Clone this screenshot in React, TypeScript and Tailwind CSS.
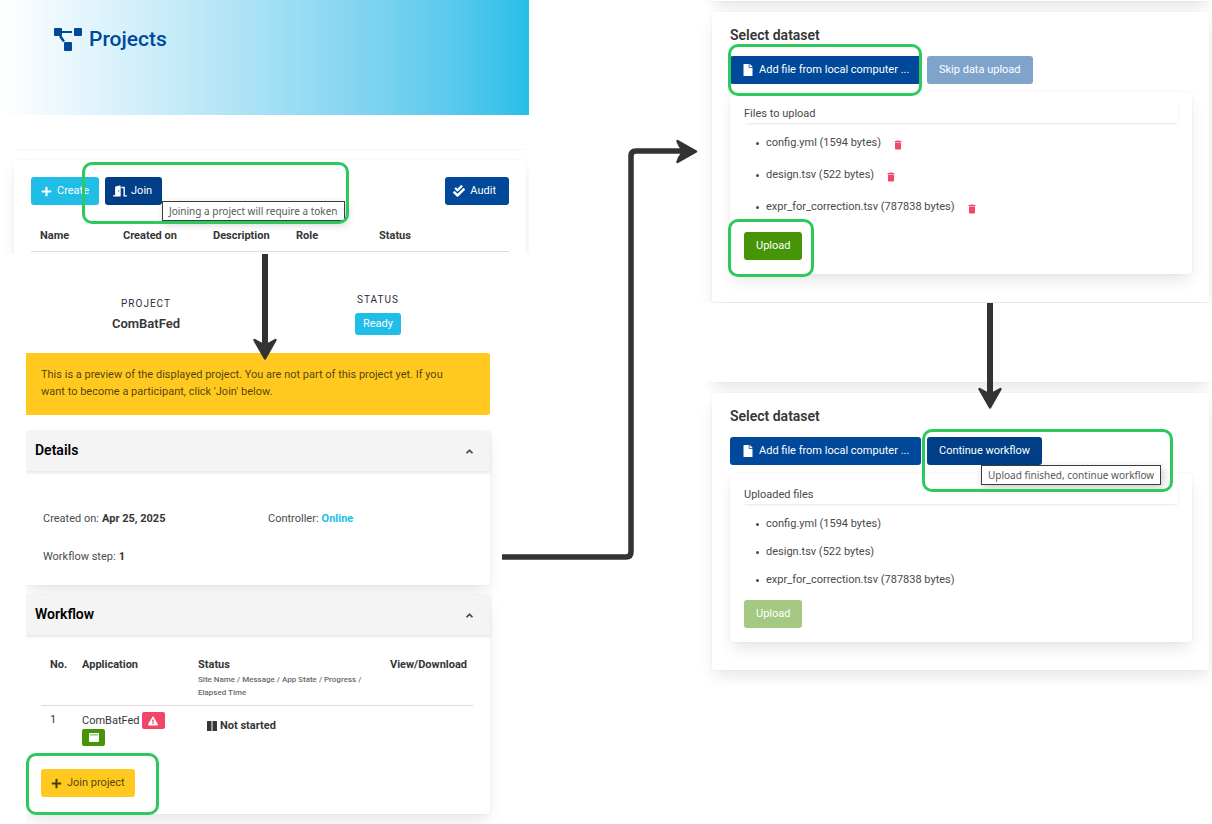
import type { ReactNode } from "react";
import { FaAngleUp, FaCheckDouble, FaDoorOpen, FaExclamationTriangle, FaFile, FaPlus } from "react-icons/fa";
import { MdDelete } from "react-icons/md";

const cardShadow = "shadow-[0_8px_16px_-2px_rgba(10,10,10,0.1),0_0_0_1px_rgba(10,10,10,0.02)]";
const button = "flex h-7 items-center rounded-[3px] text-[11px] leading-4 whitespace-nowrap";
const highlight = "pointer-events-none absolute rounded-[10px] border-3 border-[#2dc95c]";
const tooltip =
  "absolute flex h-5 items-center border border-[#3c3c3c] bg-white px-[6px] font-['Noto_Sans'] text-[10px] whitespace-nowrap text-[#575757] shadow-[2px_3px_8px_rgba(0,0,0,0.2)]";

function DownArrow({ length }: { length: number }) {
  return (
    <svg width="26" height={length} viewBox={`0 0 26 ${length}`} fill="#333" aria-hidden="true">
      <rect x="10" y="0" width="6" height={length - 12} />
      <path
        d={`M2.500 ${length - 20}Q6 ${length - 18} 10 ${length - 16}H16Q20 ${length - 18} 23.500 ${length - 20}L13 ${length - 1.5}Z`}
        stroke="#333"
        strokeWidth="2.500"
        strokeLinejoin="round"
      />
    </svg>
  );
}

function Connector() {
  return (
    <svg width="196" height="424" viewBox="0 0 196 424" aria-hidden="true">
      <path d="M0 418H124Q129 418 129 413V17Q129 12 134 12H182" fill="none" stroke="#333" strokeWidth="5.500" />
      <path
        d="M175.500 2Q177 6 179.500 9.500V15.500Q177 18 175.500 23L194 12.500Z"
        fill="#333"
        stroke="#333"
        strokeWidth="2.500"
        strokeLinejoin="round"
      />
    </svg>
  );
}

function DiagramIcon() {
  return (
    <svg width="28" height="23" viewBox="0 0 28 23" fill="currentColor" aria-hidden="true">
      <rect x="0" y="0" width="8" height="8" rx="1" />
      <rect x="20" y="0" width="8" height="8" rx="1" />
      <rect x="10" y="14" width="8" height="9" rx="1" />
      <rect x="8" y="3" width="10" height="2" />
      <path d="M6 8L10 13.500" stroke="currentColor" strokeWidth="2.500" />
    </svg>
  );
}

function WindowIcon() {
  return (
    <svg width="10" height="9" viewBox="0 0 10 9" fill="currentColor" aria-hidden="true">
      <rect width="10" height="9" rx="0.800" />
      <rect x="1" y="1.500" width="8" height="0.800" fill="#469408" />
    </svg>
  );
}

function PauseIcon() {
  return (
    <svg width="10" height="10" viewBox="0 0 10 10" fill="currentColor" aria-hidden="true">
      <rect width="4.500" height="10" rx="0.500" />
      <rect x="5.500" width="4.500" height="10" rx="0.500" />
    </svg>
  );
}

function ProjectsPanel() {
  return (
    <section className="overflow-hidden">
      <header className="h-[115px] bg-linear-to-r from-white to-[#22bfe8] pt-6 pl-[54px]">
        <h1 className="flex items-center gap-[7px] text-[21px] leading-[30px] font-medium text-[#004899]">
          <DiagramIcon />
          Projects
        </h1>
      </header>
      <div className="mt-[34px] mr-1 ml-[14px] h-px bg-[#f7f7f7]" />
      <div className={`relative mt-[10px] mr-[3px] ml-[14px] h-[94px] rounded-t px-[17px] pt-[17px] ${cardShadow}`}>
        <div className="flex gap-[6px]">
          <button className={`${button} gap-[5px] bg-[#20bee6] px-[10px] text-white`}>
            <FaPlus className="size-[11px]" />
            Create
          </button>
          <button className={`${button} gap-1 bg-[#003f87] px-[8px] pr-[10px] text-white`}>
            <FaDoorOpen className="size-[14px]" />
            Join
          </button>
          <button className={`${button} ml-auto gap-[5px] bg-[#004899] px-2 pr-[13px] text-white`}>
            <FaCheckDouble className="size-3" />
            Audit
          </button>
        </div>
        <table className="mt-[23px] w-full table-fixed border-b border-[#dbdbdb] text-left text-[11px] leading-4 text-[#363636]">
          <thead>
            <tr>
              <th className="w-[83px] pb-[7px] pl-[9px] font-bold">Name</th>
              <th className="w-[90px] pb-[7px] pl-[9px] font-bold">Created on</th>
              <th className="w-[83px] pb-[7px] pl-[9px] font-bold">Description</th>
              <th className="w-[83px] pb-[7px] pl-[9px] font-bold">Role</th>
              <th className="pb-[7px] pl-[9px] font-bold">Status</th>
            </tr>
          </thead>
        </table>
        <div role="tooltip" className={`${tooltip} top-[41px] left-[148px]`}>
          Joining a project will require a token
        </div>
        <div className={`${highlight} top-[2px] left-[68px] h-[62px] w-[267px]`} />
      </div>
    </section>
  );
}

function Summary() {
  return (
    <div className="grid grid-cols-[240fr_224fr] pt-[38px] pb-[18px] text-center">
      <div className="pt-1">
        <p className="text-[10px] leading-4 tracking-widest text-[#2b2b40]">PROJECT</p>
        <p className="mt-[2px] text-[13px] leading-5 font-semibold text-[#363636]">ComBatFed</p>
      </div>
      <div className="flex flex-col items-center">
        <p className="text-[10px] leading-4 tracking-widest text-[#2b2b40]">STATUS</p>
        <span className="mt-[5px] flex h-[22px] items-center rounded-[3px] bg-[#20bee6] px-2 text-[11px] text-white">
          Ready
        </span>
      </div>
    </div>
  );
}

function Card({ title, children }: { title: string; children: ReactNode }) {
  return (
    <section className={`rounded-r-[3px] bg-white ${cardShadow}`}>
      <header className="flex h-10 items-start justify-between bg-[#f4f4f4] pt-[9px] pr-[15px] pl-[9px] shadow-[0_2px_3px_rgba(10,10,10,0.1)]">
        <h2 className="text-[14px] leading-5 font-semibold text-black">{title}</h2>
        <button aria-label={`Collapse ${title}`} className="pt-[6px] text-[#4a4a4a]">
          <FaAngleUp className="size-[11px]" />
        </button>
      </header>
      {children}
    </section>
  );
}

function Workflow() {
  return (
    <Card title="Workflow">
      <div className="relative h-[179px] pt-[22px] pr-[17px] pl-[15px] text-[11px] leading-4">
        <table className="w-full table-fixed text-left text-[#363636]">
          <thead className="border-b border-[#dbdbdb] align-top">
            <tr>
              <th className="w-8 pl-[9px] font-bold">No.</th>
              <th className="w-[116px] pl-[9px] font-bold">Application</th>
              <th className="pl-[9px] font-bold">
                Status
                <p className="pb-[6px] text-[8px] leading-[13px] font-medium text-[#6a6a6a]">
                  Site Name / Message / App State / Progress / Elapsed Time
                </p>
              </th>
              <th className="w-[92px] pl-[9px] font-bold">View/Download</th>
            </tr>
          </thead>
          <tbody className="align-top">
            <tr>
              <td className="pt-[6px] pl-[9px]">1</td>
              <td className="pt-[6px] pl-[9px]">
                <div className="flex flex-wrap items-center gap-x-[2px]">
                  ComBatFed
                  <span className="flex h-[17px] w-[23px] items-center justify-center rounded-[2px] bg-[#f14668] text-white">
                    <FaExclamationTriangle className="size-[10px]" />
                  </span>
                  <span className="flex h-[17px] w-[23px] items-center justify-center rounded-[2px] bg-[#469408] text-white">
                    <WindowIcon />
                  </span>
                </div>
              </td>
              <td className="pt-[12px] pl-[18px]">
                <span className="flex items-center gap-[3px] font-bold">
                  <PauseIcon />
                  Not started
                </span>
              </td>
              <td />
            </tr>
          </tbody>
        </table>
        <button className={`${button} absolute bottom-[17px] left-[15px] gap-[5px] bg-[#ffc91f] px-[10px] text-black/70`}>
          <FaPlus className="size-[11px]" />
          Join project
        </button>
        <div className={`${highlight} -bottom-px left-0 h-[62px] w-[133px]`} />
      </div>
    </Card>
  );
}

function ProjectPreview() {
  return (
    <div className="flex flex-col overflow-hidden pr-[39px]">
      <Summary />
      <p className="rounded-r-[3px] bg-[#ffc91f] pt-[13px] pr-10 pb-[15px] pl-[15px] text-[11px] leading-[17px] text-black/70">
        This is a preview of the displayed project. You are not part of this project yet. If you want to become a
        participant, click 'Join' below.
      </p>
      <div className="mt-4 flex flex-col gap-[10px] pb-[10px]">
        <Card title="Details">
          <dl className="grid h-[114px] grid-cols-[225fr_222fr] content-start gap-y-[22px] pt-10 pl-[17px] text-[11px] leading-4 text-[#4a4a4a]">
            <div className="flex gap-[3px]">
              <dt>Created on:</dt>
              <dd className="font-bold text-[#363636]">Apr 25, 2025</dd>
            </div>
            <div className="flex gap-[3px]">
              <dt>Controller:</dt>
              <dd className="font-bold text-[#20bee6]">Online</dd>
            </div>
            <div className="flex gap-[3px]">
              <dt>Workflow step:</dt>
              <dd className="font-bold text-[#363636]">1</dd>
            </div>
          </dl>
        </Card>
        <Workflow />
      </div>
    </div>
  );
}

const files = ["config.yml (1594 bytes)", "design.tsv (522 bytes)", "expr_for_correction.tsv (787838 bytes)"];

function DatasetCard({ done }: { done: boolean }) {
  return (
    <section className={`relative rounded-[3px] bg-white pt-[13px] pr-[17px] pb-7 pl-[18px] ${cardShadow}`}>
      <h2 className="text-[14px] leading-5 font-semibold text-[#363636]">Select dataset</h2>
      <div className="mt-[11px] flex gap-[6px]">
        <button className={`${button} w-[191px] gap-[5px] bg-[#004899] pl-3 text-white`}>
          <FaFile className="size-3" />
          Add file from local computer ...
        </button>
        {done ? (
          <button className={`${button} bg-[#003f87] px-3 text-white`}>Continue workflow</button>
        ) : (
          <button disabled className={`${button} bg-[#80a3cc] px-3 text-white`}>
            Skip data upload
          </button>
        )}
      </div>
      <div className={`mt-2 rounded-[3px] px-[14px] pt-[11px] pb-[14px] text-[11px] leading-4 text-[#4a4a4a] ${cardShadow}`}>
        <h3 className="h-5 leading-[21px] shadow-[0_2px_2px_-1px_rgba(10,10,10,0.1),1px_0_1px_rgba(10,10,10,0.03)]">
          {done ? "Uploaded files" : "Files to upload"}
        </h3>
        <ul className={done ? "mt-3 mb-3 space-y-3" : "mt-3 mb-[17px] space-y-4"}>
          {files.map((file) => (
            <li key={file} className="flex h-4 items-center gap-[7px] pl-3">
              <span className="size-[3px] rounded-full bg-[#4a4a4a]" />
              {file}
              {!done && (
                <button aria-label={`Remove ${file}`} className="ml-1 pt-1 text-[#f14668]">
                  <MdDelete className="size-3" />
                </button>
              )}
            </li>
          ))}
        </ul>
        <button disabled={done} className={`${button} px-3 text-white ${done ? "bg-[#a3c983]" : "bg-[#469408]"}`}>
          Upload
        </button>
      </div>
      {done ? (
        <>
          <div role="tooltip" className={`${tooltip} top-[72px] left-[269px]`}>
            Upload finished, continue workflow
          </div>
          <div className={`${highlight} top-[36px] left-[210px] h-[63px] w-[251px]`} />
        </>
      ) : (
        <>
          <div className={`${highlight} top-[32px] left-[16px] h-[52px] w-[194px]`} />
          <div className={`${highlight} bottom-[25px] left-[16px] h-[58px] w-[86px]`} />
        </>
      )}
    </section>
  );
}

export default function App() {
  return (
    <main className="grid min-h-screen grid-cols-[529fr_161fr_522fr] overflow-hidden bg-white font-[Roboto,sans-serif]">
      <div className="relative">
        <ProjectsPanel />
        <div className="pl-[26px]">
          <ProjectPreview />
        </div>
        <div className="absolute top-[254px] left-1/2 -translate-x-1/2">
          <DownArrow length={106} />
        </div>
      </div>
      <div className="relative">
        <div className="absolute top-[139px] -left-[27px]">
          <Connector />
        </div>
      </div>
      <div className="relative">
        <div className="overflow-hidden pr-[3px] pb-px pl-[22px]">
          <div className={`-mt-[39px] mb-[11px] h-10 bg-white ${cardShadow}`} />
          <DatasetCard done={false} />
        </div>
        <div className="mt-[78px] overflow-hidden pr-[3px] pb-6 pl-[22px]">
          <div className={`-mt-[39px] mb-[11px] h-10 bg-white ${cardShadow}`} />
          <DatasetCard done />
        </div>
        <div className="absolute top-[303px] left-[287px]">
          <DownArrow length={106} />
        </div>
      </div>
    </main>
  );
}
